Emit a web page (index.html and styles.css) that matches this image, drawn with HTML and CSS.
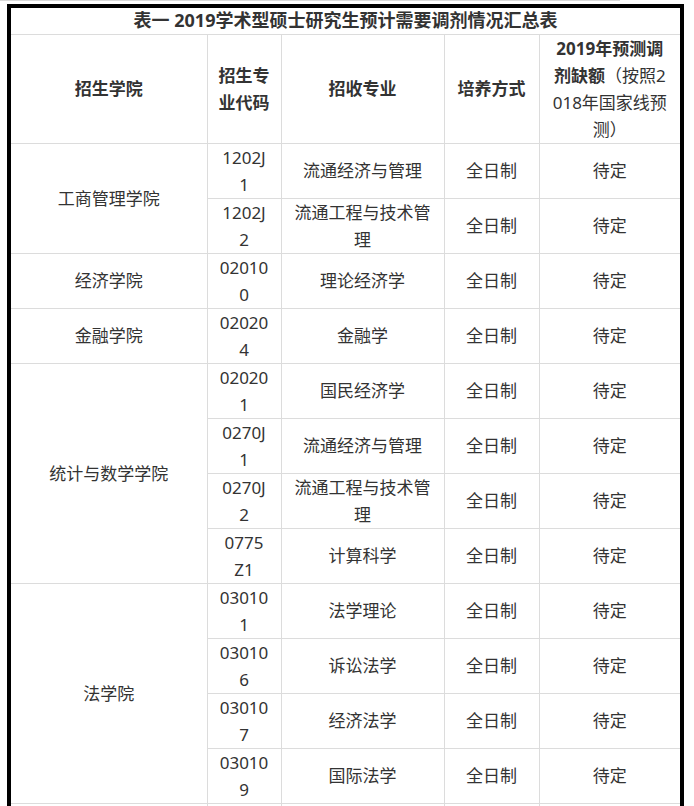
FILE: index.html
```html
<!DOCTYPE html>
<html lang="zh-CN">
<head>
<meta charset="utf-8">
<title>表一 2019学术型硕士研究生预计需要调剂情况汇总表</title>
<link rel="stylesheet" href="styles.css">
</head>
<body>
<div class="topline"></div>
<div class="frame">
<table class="tbl">
<colgroup>
<col class="c1"><col class="c2"><col class="c3"><col class="c4"><col class="c5">
</colgroup>
<tr><td class="title" colspan="5">表一 2019学术型硕士研究生预计需要调剂情况汇总表</td></tr>
<tr class="head">
<td><b>招生学院</b></td>
<td><b>招生专业代码</b></td>
<td><b>招收专业</b></td>
<td><b>培养方式</b></td>
<td class="quota"><b>2019年预测调<br>剂缺额</b>（按照2<br>018年国家线预<br>测）</td>
</tr>
<tr><td rowspan="2">工商管理学院</td><td class="code">1202J1</td><td>流通经济与管理</td><td>全日制</td><td>待定</td></tr>
<tr><td class="code">1202J2</td><td>流通工程与技术管理</td><td>全日制</td><td>待定</td></tr>
<tr><td>经济学院</td><td class="code">020100</td><td>理论经济学</td><td>全日制</td><td>待定</td></tr>
<tr><td>金融学院</td><td class="code">020204</td><td>金融学</td><td>全日制</td><td>待定</td></tr>
<tr><td rowspan="4">统计与数学学院</td><td class="code">020201</td><td>国民经济学</td><td>全日制</td><td>待定</td></tr>
<tr><td class="code">0270J1</td><td>流通经济与管理</td><td>全日制</td><td>待定</td></tr>
<tr><td class="code">0270J2</td><td>流通工程与技术管理</td><td>全日制</td><td>待定</td></tr>
<tr><td class="code">0775<br>Z1</td><td>计算科学</td><td>全日制</td><td>待定</td></tr>
<tr><td rowspan="4">法学院</td><td class="code">030101</td><td>法学理论</td><td>全日制</td><td>待定</td></tr>
<tr><td class="code">030106</td><td>诉讼法学</td><td>全日制</td><td>待定</td></tr>
<tr><td class="code">030107</td><td>经济法学</td><td>全日制</td><td>待定</td></tr>
<tr><td class="code">030109</td><td>国际法学</td><td>全日制</td><td>待定</td></tr>
<tr class="blank"><td></td><td></td><td></td><td></td><td></td></tr>
</table>
</div>
</body>
</html>
```
FILE: styles.css
```css
html, body {
  margin: 0;
  padding: 0;
  background: #fff;
  overflow: hidden;
}
body {
  font-family: "Noto Sans", "Noto Sans CJK SC", sans-serif;
  color: #333;
}
.topline {
  width: 620px;
  height: 1px;
  background: #d8d8d8;
}
.frame {
  margin: 3px 0 0 7px;
  width: 669px;
  border: 4px solid #000;
  border-bottom: 0;
}
.tbl {
  width: 669px;
  table-layout: fixed;
  border-collapse: collapse;
  border-style: hidden;
}
.c1 { width: 196px; }
.c2 { width: 74px; }
.c3 { width: 163px; }
.c4 { width: 95px; }
.c5 { width: 141px; }
.tbl td {
  border: 1px solid #dcdcdc;
  padding: 0 11px;
  font-size: 17px;
  line-height: 27px;
  height: 54px;
  text-align: center;
  vertical-align: middle;
  word-break: break-all;
  box-sizing: border-box;
}
.tbl td.code {
  padding: 0 10px;
}
.tbl td.title {
  height: 26px;
  line-height: 25px;
  font-size: 18px;
  font-weight: bold;
  color: #333;
  padding: 0;
}
.head td {
  height: 109px;
  font-size: 17px;
}
.tbl td.quota {
  padding: 0;
  white-space: nowrap;
}
.head b {
  font-weight: bold;
  color: #333;
}
.blank td {
  height: 54px;
}
```
